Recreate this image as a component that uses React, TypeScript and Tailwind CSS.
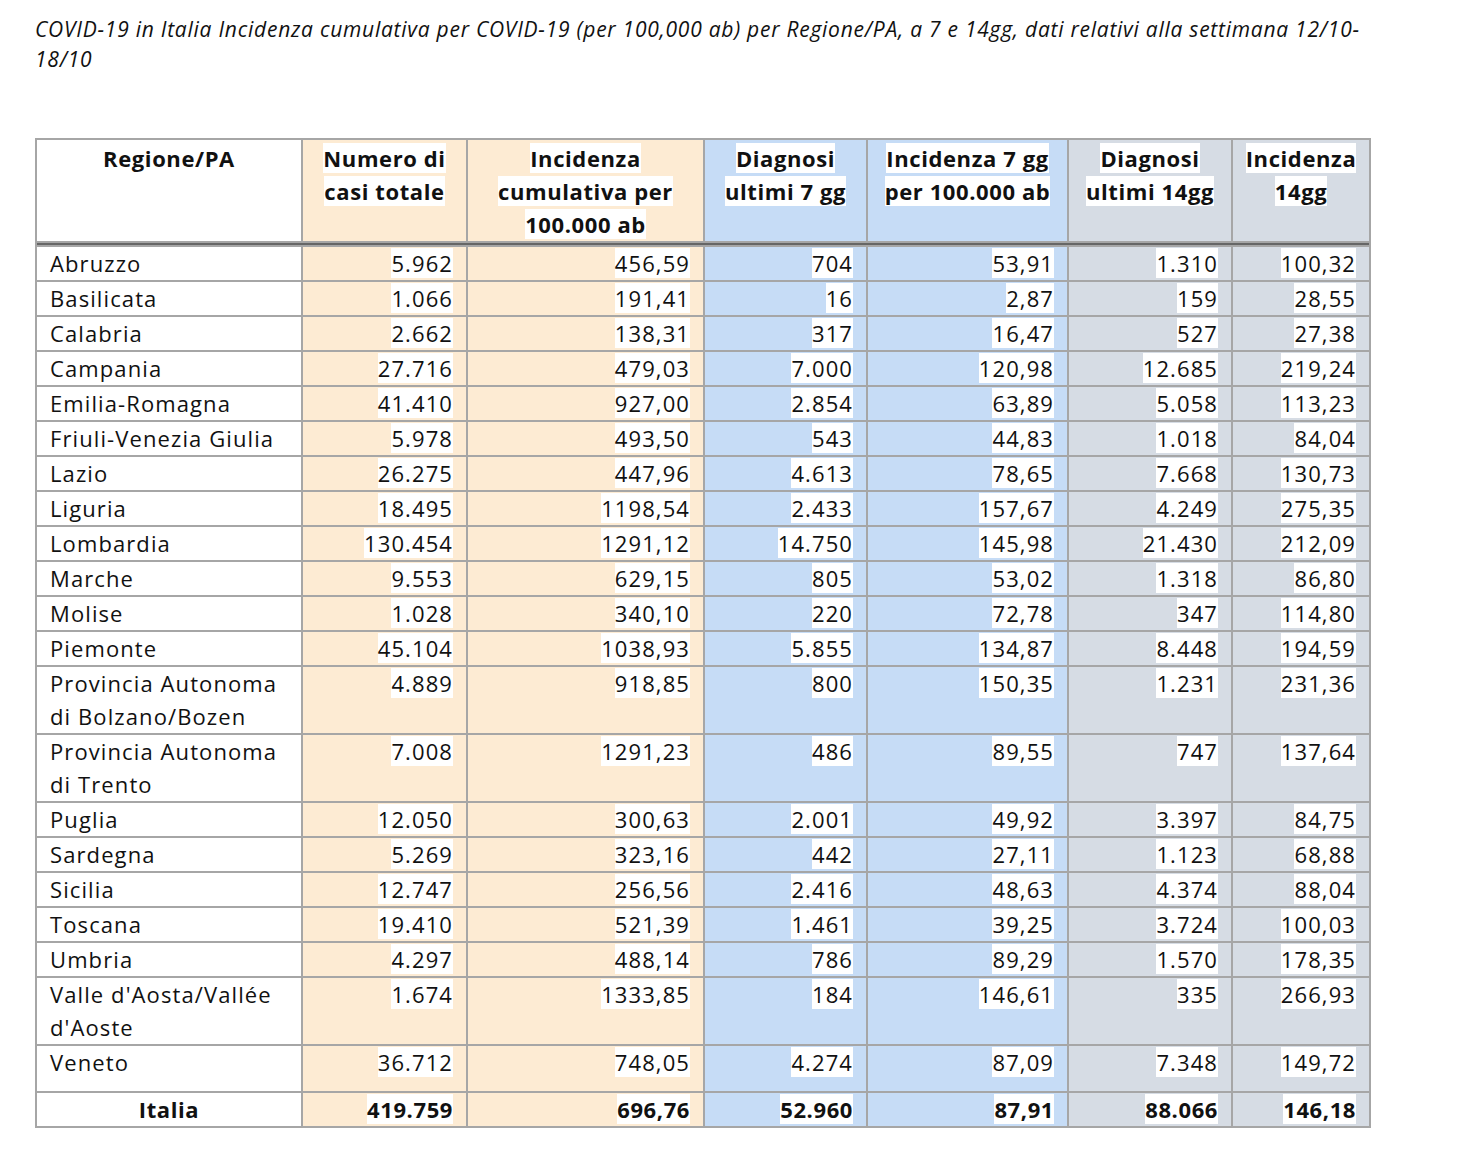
import React from "react";

type Row = {
  name: string[];
  vals: string[];
  h?: string;
};

const ROWS: Row[] = [
  { name: ["Abruzzo"], vals: ["5.962", "456,59", "704", "53,91", "1.310", "100,32"] },
  { name: ["Basilicata"], vals: ["1.066", "191,41", "16", "2,87", "159", "28,55"] },
  { name: ["Calabria"], vals: ["2.662", "138,31", "317", "16,47", "527", "27,38"] },
  { name: ["Campania"], vals: ["27.716", "479,03", "7.000", "120,98", "12.685", "219,24"] },
  { name: ["Emilia-Romagna"], vals: ["41.410", "927,00", "2.854", "63,89", "5.058", "113,23"] },
  { name: ["Friuli-Venezia Giulia"], vals: ["5.978", "493,50", "543", "44,83", "1.018", "84,04"] },
  { name: ["Lazio"], vals: ["26.275", "447,96", "4.613", "78,65", "7.668", "130,73"] },
  { name: ["Liguria"], vals: ["18.495", "1198,54", "2.433", "157,67", "4.249", "275,35"] },
  { name: ["Lombardia"], vals: ["130.454", "1291,12", "14.750", "145,98", "21.430", "212,09"] },
  { name: ["Marche"], vals: ["9.553", "629,15", "805", "53,02", "1.318", "86,80"] },
  { name: ["Molise"], vals: ["1.028", "340,10", "220", "72,78", "347", "114,80"] },
  { name: ["Piemonte"], vals: ["45.104", "1038,93", "5.855", "134,87", "8.448", "194,59"] },
  { name: ["Provincia Autonoma", "di Bolzano/Bozen"], vals: ["4.889", "918,85", "800", "150,35", "1.231", "231,36"] },
  { name: ["Provincia Autonoma", "di Trento"], vals: ["7.008", "1291,23", "486", "89,55", "747", "137,64"] },
  { name: ["Puglia"], vals: ["12.050", "300,63", "2.001", "49,92", "3.397", "84,75"] },
  { name: ["Sardegna"], vals: ["5.269", "323,16", "442", "27,11", "1.123", "68,88"] },
  { name: ["Sicilia"], vals: ["12.747", "256,56", "2.416", "48,63", "4.374", "88,04"] },
  { name: ["Toscana"], vals: ["19.410", "521,39", "1.461", "39,25", "3.724", "100,03"] },
  { name: ["Umbria"], vals: ["4.297", "488,14", "786", "89,29", "1.570", "178,35"] },
  { name: ["Valle d'Aosta/Vallée", "d'Aoste"], vals: ["1.674", "1333,85", "184", "146,61", "335", "266,93"] },
  { name: ["Veneto"], vals: ["36.712", "748,05", "4.274", "87,09", "7.348", "149,72"], h: "h-[47px]" },
];

const TOTAL = ["419.759", "696,76", "52.960", "87,91", "88.066", "146,18"];

const HEADERS: { lines: string[]; bg: string; w: string }[] = [
  { lines: ["Numero di", "casi totale"], bg: "bg-[#fdebd3]", w: "w-[165px]" },
  { lines: ["Incidenza", "cumulativa per", "100.000 ab"], bg: "bg-[#fdebd3]", w: "w-[237px]" },
  { lines: ["Diagnosi", "ultimi 7 gg"], bg: "bg-[#c6dcf6]", w: "w-[163px]" },
  { lines: ["Incidenza 7 gg", "per 100.000 ab"], bg: "bg-[#c6dcf6]", w: "w-[201px]" },
  { lines: ["Diagnosi", "ultimi 14gg"], bg: "bg-[#d6dce4]", w: "w-[164px]" },
  { lines: ["Incidenza", "14gg"], bg: "bg-[#d6dce4]", w: "w-[138px]" },
];

const COL_BG = [
  "bg-[#fdebd3]",
  "bg-[#fdebd3]",
  "bg-[#c6dcf6]",
  "bg-[#c6dcf6]",
  "bg-[#d6dce4]",
  "bg-[#d6dce4]",
];

const cell = "border-2 border-[#a6a6a6] align-top p-0";

const Lines: React.FC<{ lines: string[] }> = ({ lines }) => (
  <>
    {lines.map((l, i) => (
      <div key={i}>
        <span className="bg-white">{l}</span>
      </div>
    ))}
  </>
);

export default function App() {
  return (
    <div className="min-h-[1164px] bg-white text-black [font-family:'Open_Sans',Lato,sans-serif]">
      <p className="w-[1385px] pl-[35px] pt-[14px] text-[21px] italic leading-[30px] tracking-[0.75px] text-[#111]">
        COVID-19 in Italia Incidenza cumulativa per COVID-19 (per 100,000 ab) per Regione/PA, a 7 e 14gg, dati relativi alla settimana 12/10-18/10
      </p>

      <table className="ml-[35px] mt-[64px] border-collapse border-2 border-[#a6a6a6] text-[22px] leading-[33px] tracking-[1.1px] text-[#111]">
        <thead>
          <tr className="h-[103px]">
            <th className={`${cell} w-[266px] pt-[2px] font-bold tracking-[0.6px] text-center`}>
              <Lines lines={["Regione/PA"]} />
            </th>
            {HEADERS.map((h, i) => (
              <th key={i} className={`${cell} ${h.bg} ${h.w} pt-[2px] font-bold tracking-[0.6px] text-center`}>
                <Lines lines={h.lines} />
              </th>
            ))}
          </tr>
          <tr className="h-[4px]">
            <td colSpan={7} className="h-[4px] bg-[#666] p-0" />
          </tr>
        </thead>
        <tbody>
          {ROWS.map((r) => (
            <tr key={r.name.join(" ")} className={r.h ?? ""}>
              <td className={`${cell} pl-[13px]`}>
                {r.name.map((n, i) => (
                  <div key={i}>{n}</div>
                ))}
              </td>
              {r.vals.map((v, i) => (
                <td key={i} className={`${cell} ${COL_BG[i]} pr-[13px] text-right`}>
                  <span className="bg-white">{v}</span>
                </td>
              ))}
            </tr>
          ))}
          <tr className="font-bold tracking-[0.6px]">
            <td className={`${cell} text-center`}>Italia</td>
            {TOTAL.map((v, i) => (
              <td key={i} className={`${cell} ${COL_BG[i]} pr-[13px] text-right`}>
                <span className="bg-white">{v}</span>
              </td>
            ))}
          </tr>
        </tbody>
      </table>
    </div>
  );
}
